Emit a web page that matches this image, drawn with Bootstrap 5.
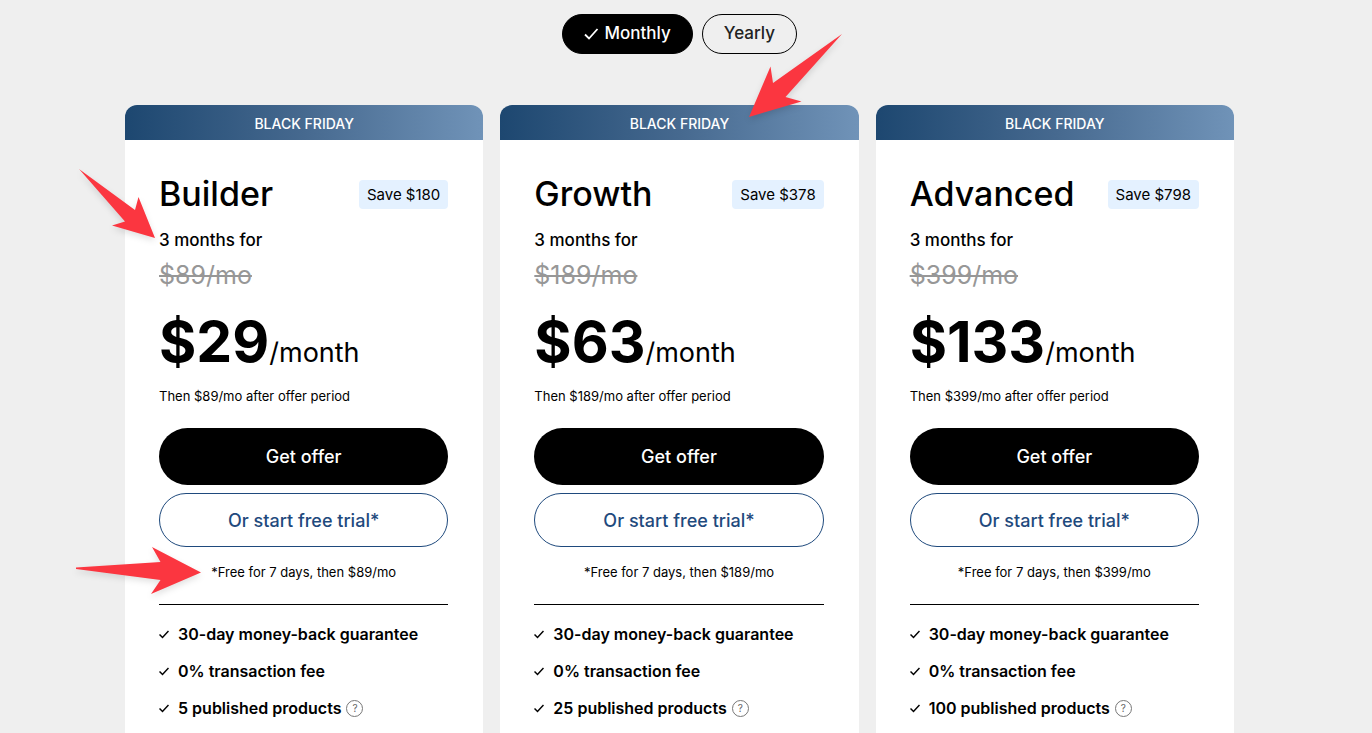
<!DOCTYPE html>
<html lang="en">
<head>
<meta charset="utf-8">
<meta name="viewport" content="width=device-width, initial-scale=1">
<title>Pricing</title>
<link href="https://cdn.jsdelivr.net/npm/bootstrap@5.3.0/dist/css/bootstrap.min.css" rel="stylesheet">
<style>
  body { background: #efefef; color: #000; font-family: Inter, "Open Sans", sans-serif; }
  .page { padding: 14px 13px 0 0; gap: 51px; }
  .plans { width: 100%; max-width: 1109px; }
  .plan-grid { display: grid; grid-template-columns: repeat(auto-fit, minmax(300px, 1fr)); gap: 17px; }

  .terms { gap: 9px; }
  .term { height: 40px; padding: 0 21px; border: 1px solid #000; border-radius: 20px; font-size: 17px; font-weight: 500; line-height: 36px; color: #222; }
  .term:hover { border-color: #000; color: #222; }
  .term .tick { display: none; }
  .btn-check:checked + .term { background: #000; border-color: #000; color: #fff; }
  .btn-check:checked + .term .tick { display: inline-block; }

  .plan { background: #fff; border-radius: 12px 12px 0 0; }
  .promo { height: 35px; padding-top: 2px; border-radius: 12px 12px 0 0; background: linear-gradient(90deg, #1d4770 0%, #46698f 50%, #7093b8 100%); color: #fff; font-size: 14px; font-weight: 500; }
  .plan-body { padding: 34px 35px 12px 34px; }
  .plan-name { font-size: 34px; font-weight: 500; line-height: 40px; }
  .save { height: 29px; padding: 0 8px; border-radius: 4px; background: #e4f1ff; font-size: 15px; line-height: 29px; }
  .duration { margin-top: 14px; font-size: 17px; font-weight: 500; line-height: 24px; }
  .old-price { margin-top: 7px; font-size: 25px; line-height: 32px; color: #979797; }
  .price { margin-top: 21px; font-size: 57px; font-weight: 700; line-height: 60px; }
  .per { font-size: 27px; font-weight: 400; line-height: 1; }
  .fine { font-size: 13px; line-height: 20px; }
  .after { margin-top: 14px; }
  .trial-note { margin-top: 15px; }

  .cta { border-radius: 29px; font-size: 18px; font-weight: 500; }
  .cta-offer, .cta-offer:hover { height: 57px; margin-top: 22px; background: #000; color: #fff; }
  .cta-trial, .cta-trial:hover { height: 54px; margin-top: 8px; background: #fff; border: 1px solid #1f4a7d; color: #1f4a7d; }

  .features { margin-top: 22px; padding-top: 17px; border-top: 1px solid #000; gap: 13px; font-size: 16px; font-weight: 600; line-height: 24px; }
  .features li { gap: 9px; }
  .hint { width: 17px; height: 17px; margin-left: -4px; border: 1px solid #777; border-radius: 50%; background: none; color: #666; font-size: 10px; line-height: 15px; }

  .pointer { position: absolute; z-index: 2; overflow: visible; fill: #fb3640; pointer-events: none; filter: drop-shadow(0 3px 3px rgba(0, 0, 0, .12)); }
  .pointer-duration { left: -46px; top: 64px; }
  .pointer-promo { left: 249px; top: -71px; }
  .pointer-note { left: -49px; top: 442px; }
</style>
</head>
<body>
<main class="page min-vh-100 d-flex flex-column align-items-center">
  <div class="terms d-flex justify-content-center" role="group" aria-label="Billing period">
    <div>
      <input type="radio" class="btn-check" name="term" id="monthly" checked>
      <label class="btn term" for="monthly"><svg class="tick" width="16" height="12" viewBox="0 0 16 12" fill="none" stroke="currentColor" stroke-width="1.800" aria-hidden="true"><path d="M1 6.5 5 10.5 13.5 1"/></svg> Monthly</label>
    </div>
    <div>
      <input type="radio" class="btn-check" name="term" id="yearly">
      <label class="btn term" for="yearly">Yearly</label>
    </div>
  </div>

  <div class="plans plan-grid flex-grow-1">
    <section class="plan position-relative">
      <svg class="pointer pointer-duration" width="76" height="69" viewBox="0 0 76 69" aria-hidden="true"><path d="M0 0 56 41 59.500 28 76 69 33 56.500 46 52.500Z"/></svg>
      <svg class="pointer pointer-note" width="125" height="47" viewBox="0 0 125 47" aria-hidden="true"><path d="M0 20.500 84.500 15 76 0 125 25.500 75 47 84.500 33 0 22Z"/></svg>
      <div class="promo d-flex align-items-center justify-content-center">BLACK FRIDAY</div>
      <div class="plan-body">
        <div class="d-flex justify-content-between align-items-center">
          <h2 class="plan-name mb-0">Builder</h2><span class="save">Save $180</span>
        </div>
        <div class="duration">3 months for</div>
        <div class="old-price"><s>$89/mo</s></div>
        <div class="price">$29<span class="per">/month</span></div>
        <div class="fine after">Then $89/mo after offer period</div>
        <button type="button" class="btn cta cta-offer w-100">Get offer</button>
        <button type="button" class="btn cta cta-trial w-100">Or start free trial*</button>
        <div class="fine trial-note text-center">*Free for 7 days, then $89/mo</div>
        <ul class="features list-unstyled mb-0 d-flex flex-column">
          <li class="d-flex align-items-center"><svg width="10" height="9" viewBox="0 0 10 9" fill="none" stroke="currentColor" stroke-width="1.5" aria-hidden="true"><path d="M.5 4.500 3.500 7.500 9.500 1"/></svg>30-day money-back guarantee</li>
          <li class="d-flex align-items-center"><svg width="10" height="9" viewBox="0 0 10 9" fill="none" stroke="currentColor" stroke-width="1.5" aria-hidden="true"><path d="M.5 4.500 3.500 7.500 9.500 1"/></svg>0% transaction fee</li>
          <li class="d-flex align-items-center"><svg width="10" height="9" viewBox="0 0 10 9" fill="none" stroke="currentColor" stroke-width="1.5" aria-hidden="true"><path d="M.5 4.500 3.500 7.500 9.500 1"/></svg>5 published products <button type="button" class="hint p-0">?</button></li>
        </ul>
      </div>
    </section>

    <section class="plan position-relative">
      <svg class="pointer pointer-promo" width="93" height="83" viewBox="0 0 93 83" aria-hidden="true"><path d="M93 0 24 49 21.500 32.500 0 83 52.500 67.500 36.500 63Z"/></svg>
      <div class="promo d-flex align-items-center justify-content-center">BLACK FRIDAY</div>
      <div class="plan-body">
        <div class="d-flex justify-content-between align-items-center">
          <h2 class="plan-name mb-0">Growth</h2><span class="save">Save $378</span>
        </div>
        <div class="duration">3 months for</div>
        <div class="old-price"><s>$189/mo</s></div>
        <div class="price">$63<span class="per">/month</span></div>
        <div class="fine after">Then $189/mo after offer period</div>
        <button type="button" class="btn cta cta-offer w-100">Get offer</button>
        <button type="button" class="btn cta cta-trial w-100">Or start free trial*</button>
        <div class="fine trial-note text-center">*Free for 7 days, then $189/mo</div>
        <ul class="features list-unstyled mb-0 d-flex flex-column">
          <li class="d-flex align-items-center"><svg width="10" height="9" viewBox="0 0 10 9" fill="none" stroke="currentColor" stroke-width="1.5" aria-hidden="true"><path d="M.5 4.500 3.500 7.500 9.500 1"/></svg>30-day money-back guarantee</li>
          <li class="d-flex align-items-center"><svg width="10" height="9" viewBox="0 0 10 9" fill="none" stroke="currentColor" stroke-width="1.5" aria-hidden="true"><path d="M.5 4.500 3.500 7.500 9.500 1"/></svg>0% transaction fee</li>
          <li class="d-flex align-items-center"><svg width="10" height="9" viewBox="0 0 10 9" fill="none" stroke="currentColor" stroke-width="1.5" aria-hidden="true"><path d="M.5 4.500 3.500 7.500 9.500 1"/></svg>25 published products <button type="button" class="hint p-0">?</button></li>
        </ul>
      </div>
    </section>

    <section class="plan position-relative">
      <div class="promo d-flex align-items-center justify-content-center">BLACK FRIDAY</div>
      <div class="plan-body">
        <div class="d-flex justify-content-between align-items-center">
          <h2 class="plan-name mb-0">Advanced</h2><span class="save">Save $798</span>
        </div>
        <div class="duration">3 months for</div>
        <div class="old-price"><s>$399/mo</s></div>
        <div class="price">$133<span class="per">/month</span></div>
        <div class="fine after">Then $399/mo after offer period</div>
        <button type="button" class="btn cta cta-offer w-100">Get offer</button>
        <button type="button" class="btn cta cta-trial w-100">Or start free trial*</button>
        <div class="fine trial-note text-center">*Free for 7 days, then $399/mo</div>
        <ul class="features list-unstyled mb-0 d-flex flex-column">
          <li class="d-flex align-items-center"><svg width="10" height="9" viewBox="0 0 10 9" fill="none" stroke="currentColor" stroke-width="1.5" aria-hidden="true"><path d="M.5 4.500 3.500 7.500 9.500 1"/></svg>30-day money-back guarantee</li>
          <li class="d-flex align-items-center"><svg width="10" height="9" viewBox="0 0 10 9" fill="none" stroke="currentColor" stroke-width="1.5" aria-hidden="true"><path d="M.5 4.500 3.500 7.500 9.500 1"/></svg>0% transaction fee</li>
          <li class="d-flex align-items-center"><svg width="10" height="9" viewBox="0 0 10 9" fill="none" stroke="currentColor" stroke-width="1.5" aria-hidden="true"><path d="M.5 4.500 3.500 7.500 9.500 1"/></svg>100 published products <button type="button" class="hint p-0">?</button></li>
        </ul>
      </div>
    </section>
  </div>
</main>
<script src="https://cdn.jsdelivr.net/npm/bootstrap@5.3.0/dist/js/bootstrap.bundle.min.js"></script>
</body>
</html>
